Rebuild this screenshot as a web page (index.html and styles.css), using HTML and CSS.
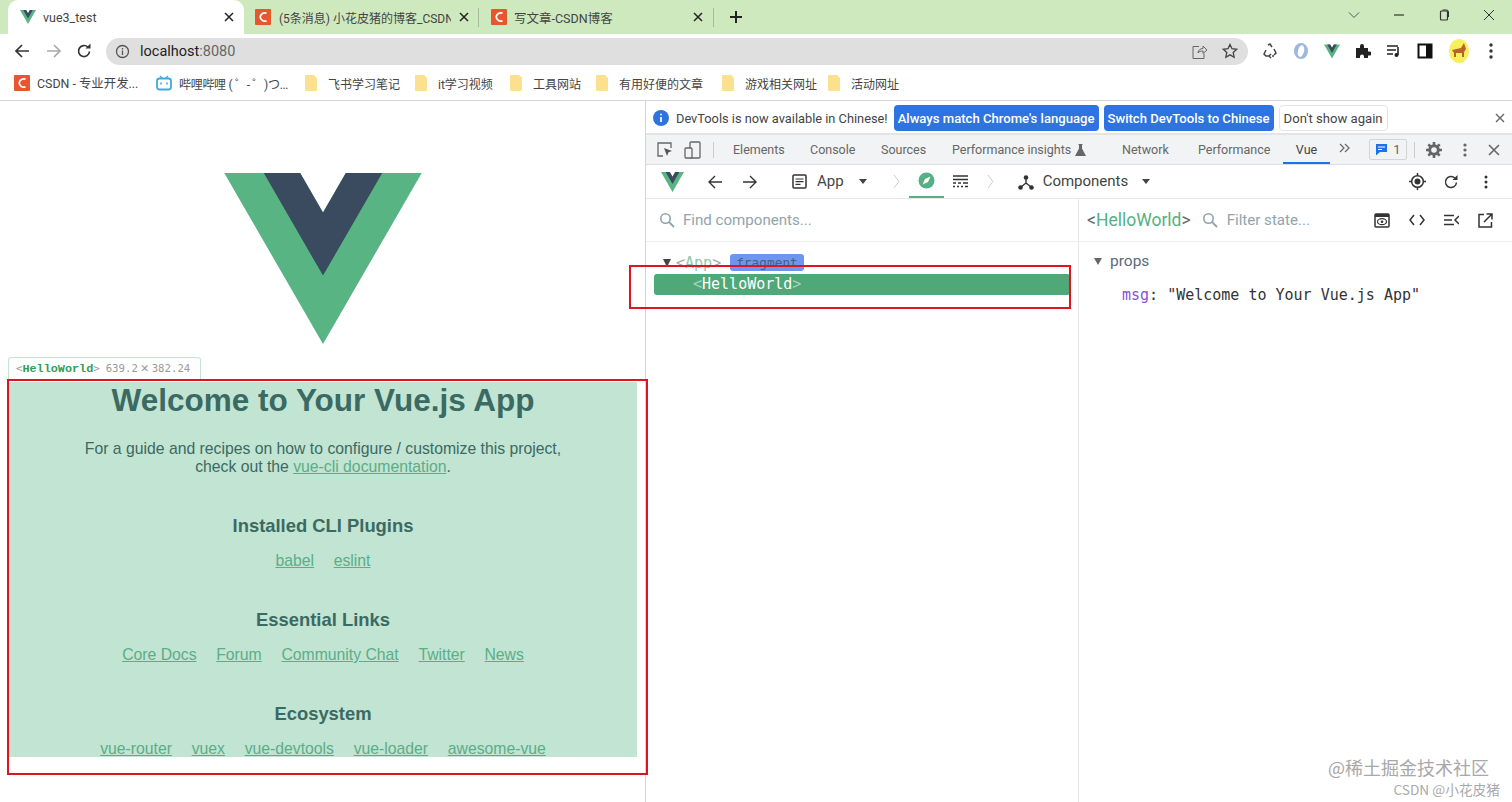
FILE: index.html
```html
<!DOCTYPE html>
<html lang="en">
<head>
  <meta charset="UTF-8" />
  <title>vue3_test</title>
  <link rel="stylesheet" href="styles.css">
</head>
<body>
  <svg class="defs" width="0" height="0">
    <symbol id="vue" viewBox="0 0 261.76 226.69">
      <path fill="#58b583" d="M161.096.001l-30.225 52.351L100.647.001H-.005l130.877 226.688L261.749.001z"/>
      <path fill="#3a4a5f" d="M161.096.001l-30.225 52.351L100.647.001H52.346l78.526 136.01L209.398.001z"/>
    </symbol>
    <symbol id="csdn" viewBox="0 0 16 16">
      <rect width="16" height="16" rx="1" fill="#e8562f"/>
      <path d="M11.5 4.2A4.6 4.6 0 0 0 5.2 8a4.6 4.6 0 0 0 6.3 3.8" fill="none" stroke="#fff" stroke-width="1.8"/>
    </symbol>
    <symbol id="folder" viewBox="0 0 13 16">
      <path d="M1 0h8l3 3v12a1 1 0 0 1-1 1H1a1 1 0 0 1-1-1V1a1 1 0 0 1 1-1z" fill="#fbe08e"/>
    </symbol>
    <symbol id="search" viewBox="0 0 16 16">
      <circle cx="6.5" cy="6.5" r="4.7" fill="none" stroke="currentColor" stroke-width="1.6"/>
      <path d="M10 10l5 5" stroke="currentColor" stroke-width="1.8"/>
    </symbol>
    <symbol id="close" viewBox="0 0 10 10">
      <path d="M1 1l8 8M9 1L1 9" stroke="#222" stroke-width="1.5"/>
    </symbol>
  </svg>

  <div class="tabstrip">
    <div class="tab active">
      <svg class="fav" width="16" height="14"><use href="#vue"/></svg>
      <span class="tab-title">vue3_test</span>
      <svg class="tab-x" width="10" height="10"><use href="#close"/></svg>
    </div>
    <div class="tab second-tab">
      <svg class="fav" width="16" height="20"><use href="#csdn"/></svg>
      <span class="tab-title">(5条消息) 小花皮猪的博客_CSDN</span>
      <svg class="tab-x" width="10" height="10"><use href="#close"/></svg>
    </div>
    <div class="tab third-tab">
      <svg class="fav" width="16" height="20"><use href="#csdn"/></svg>
      <span class="tab-title">写文章-CSDN博客</span>
      <svg class="tab-x" width="10" height="10"><use href="#close"/></svg>
    </div>
    <svg class="plus" width="14" height="14" viewBox="0 0 14 14"><path d="M7 1v12M1 7h12" stroke="#222" stroke-width="2"/></svg>
    <div class="win-controls">
      <svg width="12" height="12" viewBox="0 0 12 12"><path d="M1 3.5l5 5 5-5" fill="none" stroke="#555"/></svg>
      <svg width="12" height="12" viewBox="0 0 12 12"><path d="M1 6h10" stroke="#333" stroke-width="1.2"/></svg>
      <svg width="12" height="12" viewBox="0 0 12 12"><rect x="2.5" y="2" width="7" height="9" rx="1" fill="none" stroke="#333" stroke-width="1.2"/><path d="M4.5 1h4a2 2 0 0 1 2 2v5" fill="none" stroke="#333"/></svg>
      <svg width="12" height="12" viewBox="0 0 12 12"><path d="M1 1l10 10M11 1L1 11" stroke="#333"/></svg>
    </div>
  </div>

  <div class="toolbar">
    <svg width="16" height="16" viewBox="0 0 16 16"><path d="M15 8H2M8 2L2 8l6 6" fill="none" stroke="#333" stroke-width="1.7"/></svg>
    <svg width="16" height="16" viewBox="0 0 16 16"><path d="M1 8h13M8 2l6 6-6 6" fill="none" stroke="#aaa" stroke-width="1.7"/></svg>
    <svg width="16" height="16" viewBox="0 0 16 16"><path d="M13.5 8.5A5.5 5.5 0 1 1 11.8 4" fill="none" stroke="#333" stroke-width="1.7"/><path d="M9.5 5.6h5v-5z" fill="#333"/></svg>
    <div class="omnibox">
      <svg width="15" height="15" viewBox="0 0 15 15"><circle cx="7.5" cy="7.5" r="6" fill="none" stroke="#555" stroke-width="1.3"/><path d="M7.5 6.5v4.5M7.5 4v1.4" stroke="#555" stroke-width="1.3"/></svg>
      <span class="url">localhost<span class="port">:8080</span></span>
      <span class="spring"></span>
      <svg width="17" height="17" viewBox="0 0 17 17"><path d="M8 3.5H2v12h11v-5" fill="none" stroke="#666"/><path d="M7 10c0-3 2.500-4.500 5-4.500V3l4 4-4 3.500V8c-2 0-4 .5-5 2z" fill="none" stroke="#666"/></svg>
      <svg width="16" height="16" viewBox="0 0 17 17"><path d="M8.500 1.500l2.100 4.600 5 .6-3.700 3.400 1 5-4.400-2.500-4.400 2.500 1-5L1.400 6.700l5-.6z" fill="none" stroke="#444" stroke-width="1.400"/></svg>
    </div>
    <div class="ext">
      <svg width="16" height="16" viewBox="0 0 16 16"><path d="M6 2l2-1 2 3M12 6l2 4-2 2M4 7l-2 4 2 2h3M10 13h2M9 15l-2-2 2-2" fill="none" stroke="#444" stroke-width="1.500"/></svg>
      <svg width="16" height="18" viewBox="0 0 16 18"><ellipse cx="8" cy="9" rx="7" ry="8" fill="#9db8dc"/><ellipse cx="8" cy="9" rx="3" ry="6" fill="#fff" transform="rotate(14 8 9)"/></svg>
      <svg width="16" height="15"><use href="#vue"/></svg>
      <svg width="16" height="16" viewBox="0 0 16 16"><path d="M1 5h4V3a2 2 0 0 1 4 0v2h4v3.500h1.500a2 2 0 0 1 0 4H13V15H9v-1.500a2 2 0 0 0-4 0V15H1z" fill="#222"/></svg>
      <svg width="16" height="16" viewBox="0 0 16 16"><path d="M1 3h11M1 7h9M1 11h6" stroke="#222" stroke-width="1.600"/><path d="M12 4v8" stroke="#222" stroke-width="1.600"/><circle cx="10.500" cy="12" r="2" fill="#222"/></svg>
      <svg width="16" height="16" viewBox="0 0 16 16"><rect x="1.500" y="1.500" width="13" height="13" fill="none" stroke="#111" stroke-width="2"/><rect x="9" y="2" width="5" height="12" fill="#111"/></svg>
      <svg width="22" height="24" viewBox="0 0 22 24"><ellipse cx="11" cy="12" rx="10" ry="12" fill="#f8ef5c"/><path d="M4 11l9-2 3-5 2 6-2 3v5h-2v-4H8v4H6v-4z" fill="#b9622c"/></svg>
      <svg class="dots" width="4" height="16" viewBox="0 0 4 16"><circle cx="2" cy="2" r="1.700"/><circle cx="2" cy="8" r="1.700"/><circle cx="2" cy="14" r="1.700"/></svg>
    </div>
  </div>

  <div class="bookmarks">
    <div class="bm first"><svg width="16" height="16"><use href="#csdn"/></svg>CSDN - 专业开发...</div>
    <div class="bm second">
      <svg width="16" height="16" viewBox="0 0 16 16"><rect x="1" y="3.500" width="14" height="11" rx="2.500" fill="none" stroke="#3fa9e0" stroke-width="1.800"/><path d="M4 1l2.500 2.500M12 1L9.500 3.500" stroke="#3fa9e0" stroke-width="1.400"/><path d="M5 7.500v2M11 7.500v2" stroke="#3fa9e0" stroke-width="1.600"/></svg>
      <span class="bili">哔哩哔哩 ( ゜- ゜)つ...</span>
    </div>
    <div class="bm folder a"><svg width="13" height="16"><use href="#folder"/></svg>飞书学习笔记</div>
    <div class="bm folder b"><svg width="13" height="16"><use href="#folder"/></svg>it学习视频</div>
    <div class="bm folder c"><svg width="13" height="16"><use href="#folder"/></svg>工具网站</div>
    <div class="bm folder d"><svg width="13" height="16"><use href="#folder"/></svg>有用好便的文章</div>
    <div class="bm folder e"><svg width="13" height="16"><use href="#folder"/></svg>游戏相关网址</div>
    <div class="bm folder f"><svg width="13" height="16"><use href="#folder"/></svg>活动网址</div>
  </div>

  <main class="viewport">
    <section class="page">
      <svg class="logo" width="198" height="171"><use href="#vue"/></svg>
      <div class="hello">
        <h1>Welcome to Your Vue.js App</h1>
        <p>For a guide and recipes on how to configure / customize this project,<br>check out the <a>vue-cli documentation</a>.</p>
        <h3>Installed CLI Plugins</h3>
        <ul><li><a>babel</a></li><li><a>eslint</a></li></ul>
        <h3>Essential Links</h3>
        <ul><li><a>Core Docs</a></li><li><a>Forum</a></li><li><a>Community Chat</a></li><li><a>Twitter</a></li><li><a>News</a></li></ul>
        <h3>Ecosystem</h3>
        <ul><li><a>vue-router</a></li><li><a>vuex</a></li><li><a>vue-devtools</a></li><li><a>vue-loader</a></li><li><a>awesome-vue</a></li></ul>
      </div>
      <div class="inspect-tip"><span class="ang">&lt;</span><b>HelloWorld</b><span class="ang">&gt;</span><span class="dim size">639.2<span class="times">✕</span>382.24</span></div>
    </section>

    <section class="devtools">
      <div class="infobar">
        <svg width="16" height="16" viewBox="0 0 16 16"><circle cx="8" cy="8" r="8" fill="#2f73e0"/><path d="M8 7v5M8 3.700v1.600" stroke="#fff" stroke-width="1.700"/></svg>
        <span class="info-text">DevTools is now available in Chinese!</span>
        <button class="primary">Always match Chrome's language</button>
        <button class="primary">Switch DevTools to Chinese</button>
        <button class="plain">Don't show again</button>
        <span class="spring"></span>
        <svg width="10" height="10" viewBox="0 0 10 10"><path d="M1 1l8 8M9 1L1 9" stroke="#666" stroke-width="1.400"/></svg>
      </div>

      <div class="dt-tabs">
        <svg width="17" height="17" viewBox="0 0 17 17"><path d="M7 15H2V2h13v5" fill="none" stroke="#666" stroke-width="1.300"/><path d="M8 7l8 3-3.500 1.300L11 15z" fill="#555"/></svg>
        <svg class="device" width="17" height="18" viewBox="0 0 17 18"><rect x="6" y="1" width="10" height="16" rx="1" fill="none" stroke="#666" stroke-width="1.300"/><rect x="1" y="7" width="7" height="10" rx="1" fill="#f1f3f4" stroke="#666" stroke-width="1.300"/></svg>
        <span class="sep"></span>
        <span class="dt-tab t1">Elements</span>
        <span class="dt-tab t2">Console</span>
        <span class="dt-tab t3">Sources</span>
        <span class="dt-tab t4">Performance insights
          <svg width="11" height="12" viewBox="0 0 11 12"><path d="M3.500 0h4v1H7v3.500l4 7.500H0l4-7.500V1h-.5z" fill="#666"/></svg>
        </span>
        <span class="dt-tab t5">Network</span>
        <span class="dt-tab t6">Performance</span>
        <span class="dt-tab current">Vue</span>
        <svg class="more" width="11" height="10" viewBox="0 0 11 10"><path d="M1 1l4 4-4 4M6 1l4 4-4 4" fill="none" stroke="#666" stroke-width="1.200"/></svg>
        <span class="issues">
          <svg width="13" height="13" viewBox="0 0 13 13"><path d="M1 1h11v8H5l-4 3.500z" fill="#1a73e8"/><path d="M3 4h7M3 6.500h4" stroke="#fff"/></svg>
          1
        </span>
        <span class="sep two"></span>
        <svg width="16" height="16" viewBox="0 0 16 16"><circle cx="8" cy="8" r="4.300" fill="none" stroke="#666" stroke-width="3"/><path d="M8 0v3M8 13v3M0 8h3M13 8h3M2.300 2.300l2.200 2.200M11.500 11.500l2.200 2.200M2.300 13.700l2.200-2.200M11.500 4.500l2.200-2.200" stroke="#666" stroke-width="2.600"/></svg>
        <svg class="gap-dots" width="4" height="14" viewBox="0 0 4 14" fill="#666"><circle cx="2" cy="2" r="1.600"/><circle cx="2" cy="7" r="1.600"/><circle cx="2" cy="12" r="1.600"/></svg>
        <svg class="gap-x" width="12" height="12" viewBox="0 0 12 12"><path d="M1 1l10 10M11 1L1 11" stroke="#666" stroke-width="1.600"/></svg>
      </div>

      <div class="vue-bar">
        <svg class="vb-logo" width="23" height="20"><use href="#vue"/></svg>
        <svg class="vb-back" width="14" height="14" viewBox="0 0 14 14"><path d="M14 7H1.500M7 1L1 7l6 6" fill="none" stroke="#333" stroke-width="1.400"/></svg>
        <svg class="vb-fwd" width="14" height="14" viewBox="0 0 14 14"><path d="M0 7h12.500M7 1l6 6-6 6" fill="none" stroke="#333" stroke-width="1.400"/></svg>
        <svg class="vb-app" width="15" height="15" viewBox="0 0 15 15"><rect x="1" y="1" width="13" height="13" rx="1" fill="none" stroke="#333" stroke-width="1.500"/><path d="M3.500 5h8M3.500 7.700h8M3.500 10.400h5" stroke="#333" stroke-width="1.200"/></svg>
        <span class="vb-label app">App</span>
        <span class="caret c1"></span>
        <svg class="chev c2" width="7" height="15" viewBox="0 0 7 15"><path d="M1 1l5 6.500L1 14" fill="none" stroke="#ccc"/></svg>
        <span class="compass">
          <svg width="17" height="17" viewBox="0 0 17 17"><circle cx="8.500" cy="8.500" r="8" fill="#55b083"/><path d="M12.500 4.500L10 10l-5.500 2.500L7 7z" fill="#fff"/></svg>
        </span>
        <svg class="vb-table" width="15" height="13" viewBox="0 0 15 13"><path d="M0 1h15M0 4.500h15M0 8h3M5 8h3M10 8h5M0 11.500h2M4 11.500h2M8 11.500h2M12 11.500h3" stroke="#333" stroke-width="1.400"/></svg>
        <svg class="chev c3" width="7" height="15" viewBox="0 0 7 15"><path d="M1 1l5 6.500L1 14" fill="none" stroke="#ccc"/></svg>
        <svg class="vb-tree" width="16" height="16" viewBox="0 0 16 16"><circle cx="8" cy="3.500" r="2.300" fill="#333"/><circle cx="2.500" cy="13.500" r="2.300" fill="#333"/><circle cx="13.500" cy="13.500" r="2.300" fill="#333"/><path d="M8 4v5M8 9l-5 4M8 9l5 4" stroke="#333" stroke-width="1.400"/></svg>
        <span class="vb-label comp">Components</span>
        <span class="caret c4"></span>
        <span class="spring"></span>
        <svg width="17" height="17" viewBox="0 0 16 16"><circle cx="8" cy="8" r="5.500" fill="none" stroke="#333" stroke-width="1.400"/><circle cx="8" cy="8" r="2.800" fill="#333"/><path d="M8 0v2.500M8 13.500V16M0 8h2.500M13.500 8H16" stroke="#333" stroke-width="1.400"/></svg>
        <svg class="vb-reload" width="14" height="14" viewBox="0 0 14 14"><path d="M12.500 7.500A5.500 5.500 0 1 1 10.800 3" fill="none" stroke="#333" stroke-width="1.500"/><path d="M8.500 5h5V0z" fill="#333"/></svg>
        <svg class="vb-dots" width="4" height="14" viewBox="0 0 4 14" fill="#333"><circle cx="2" cy="2" r="1.500"/><circle cx="2" cy="7" r="1.500"/><circle cx="2" cy="12" r="1.500"/></svg>
      </div>

      <div class="split">
        <div class="tree-pane">
          <div class="search-row">
            <svg class="s-icon" width="16" height="16"><use href="#search"/></svg>
            <span class="ph">Find components...</span>
          </div>
          <div class="tree">
            <div class="node root"><span class="tri"></span><span class="ang-g"><i>&lt;</i>App<i>&gt;</i></span><span class="badge">fragment</span></div>
            <div class="node selected"><span class="ang-w">&lt;</span>HelloWorld<span class="ang-w">&gt;</span></div>
          </div>
        </div>
        <div class="state-pane">
          <div class="search-row state-head">
            <span class="comp-name"><i>&lt;</i>HelloWorld<i>&gt;</i></span>
            <svg class="s-icon" width="16" height="16"><use href="#search"/></svg>
            <span class="ph">Filter state...</span>
            <span class="spring"></span>
            <span class="state-icons">
              <svg width="16" height="15" viewBox="0 0 16 15"><rect x="1" y="1" width="14" height="13" rx="1" fill="none" stroke="#333" stroke-width="1.500"/><rect x="1" y="1" width="14" height="3" fill="#333"/><ellipse cx="8" cy="8.700" rx="4.500" ry="3" fill="none" stroke="#333" stroke-width="1.200"/><circle cx="8" cy="8.700" r="1.300" fill="#333"/></svg>
              <svg width="16" height="12" viewBox="0 0 16 12"><path d="M5 1L1 6l4 5M11 1l4 5-4 5" fill="none" stroke="#333" stroke-width="1.500"/></svg>
              <svg width="15" height="12" viewBox="0 0 15 12"><path d="M0 1.500h10M0 6h8M0 10.500h10M15 2l-4 4 4 4" fill="none" stroke="#333" stroke-width="1.500"/></svg>
              <svg width="15" height="15" viewBox="0 0 15 15"><path d="M6 1.500H1v12.500h12.500V9M8.500 1h5.500v5.500M14 1L6 9" fill="none" stroke="#333" stroke-width="1.500"/></svg>
            </span>
          </div>
          <div class="props-title"><span class="tri small"></span>props</div>
          <div class="prop"><span class="key">msg</span>: "Welcome to Your Vue.js App"</div>
        </div>
      </div>
    </section>

    <div class="mark mark-page"></div>
    <div class="mark mark-node"></div>
    <div class="watermark">
      <div class="wm1">@稀土掘金技术社区</div>
      <div class="wm2">CSDN @小花皮猪</div>
    </div>
  </main>
</body>
</html>
```

FILE: styles.css
```css
* {
  box-sizing: border-box;
}
html, body {
  margin: 0;
  height: 802px;
  overflow: hidden;
}
body {
  font-family: Roboto, "Noto Sans CJK SC", sans-serif;
  background-color: #fff;
  color: #333;
  display: flex;
  flex-direction: column;
}
.defs {
  position: absolute;
}
.spring {
  flex: 1;
}

/* browser chrome */
.tabstrip {
  height: 34px;
  background-color: #cfe9bf;
  display: flex;
  align-items: flex-end;
  padding-left: 8px;
  flex-shrink: 0;
}
.tab {
  width: 236px;
  height: 34px;
  padding: 0 10px 0 12px;
  display: flex;
  align-items: center;
  gap: 7px;
  font-size: 12.500px;
  color: #444;
  position: relative;
  flex-shrink: 0;
}
.tab.active {
  background-color: #fff;
  border-radius: 10px 10px 0 0;
}
.tab:not(.active)::after {
  content: "";
  position: absolute;
  right: 0;
  top: 8px;
  height: 19px;
  width: 1px;
  background-color: #a9bb9d;
}
.second-tab {
  width: 235px;
  padding: 0 10px 0 11px;
  gap: 8px;
  font-size: 12px;
}
.third-tab {
  width: 235px;
  padding-right: 11px;
}
.fav {
  flex-shrink: 0;
}
.tab-title {
  flex: 1;
  min-width: 0;
  white-space: nowrap;
  overflow: hidden;
}
.tab-x {
  flex-shrink: 0;
  margin-left: 6px;
}
.second-tab .tab-x {
  margin-left: 0;
}
.plus {
  margin: 0 0 10px 15px;
  flex-shrink: 0;
}
.win-controls {
  margin-left: auto;
  display: flex;
  gap: 33px;
  align-self: center;
  padding-right: 17px;
  margin-top: -4px;
}
.win-controls svg {
  display: block;
}
.toolbar {
  height: 34px;
  display: flex;
  align-items: center;
  padding-left: 14px;
  gap: 14px;
  flex-shrink: 0;
}
.toolbar > svg:nth-child(2) {
  margin-left: 2px;
}
.omnibox {
  width: 1142px;
  height: 27px;
  background-color: #dfdfdf;
  border-radius: 14px;
  display: flex;
  align-items: center;
  gap: 10px;
  padding: 0 10px 0 9px;
  font-size: 14.500px;
}
.omnibox svg:nth-of-type(3) {
  margin-left: 4px;
}
.url {
  color: #222;
}
.port {
  color: #666;
}
.ext {
  display: flex;
  align-items: center;
  gap: 15px;
}
.ext svg {
  display: block;
}
.ext .dots {
  fill: #333;
  margin-left: 4px;
}
.bookmarks {
  height: 33px;
  display: flex;
  align-items: center;
  font-size: 12px;
  color: #444;
  border-bottom: 1px solid #d5d5d5;
  padding: 0 0 2px 14px;
  flex-shrink: 0;
}
.bm {
  display: flex;
  align-items: center;
  gap: 7px;
  white-space: nowrap;
}
.first {
  width: 142px;
  font-size: 12.400px;
}
.second { width: 149px; }
.bili {
  letter-spacing: -0.300px;
}
.folder { gap: 10px; }
.a { width: 110px; }
.b { width: 95px; }
.c { width: 86px; }
.d { width: 126px; }
.e { width: 106px; }

/* page under test */
.viewport {
  flex: 1;
  display: flex;
  position: relative;
  min-height: 0;
}
.page {
  width: 645px;
  flex-shrink: 0;
  position: relative;
  font-family: "Liberation Sans", Arial, sans-serif;
  color: #2c3e50;
  text-align: center;
}
.logo {
  display: block;
  margin: 72px auto 0;
}
.hello {
  width: 628px;
  height: 375px;
  margin: 38px 0 0 9px;
  background-color: #c2e4d2;
  color: #3a6a63;
  overflow: hidden;
}
h1 {
  font-size: 31.500px;
  line-height: 37px;
  margin: 0;
}
.hello p {
  font-size: 15.750px;
  line-height: 18px;
  margin: 21px 0 0;
}
h3 {
  font-size: 18.400px;
  line-height: 22px;
  margin: 38.500px 0 0;
}
.hello ul {
  list-style: none;
  margin: 15.500px 0 0;
  padding: 0;
  display: flex;
  justify-content: center;
  gap: 19.700px;
  font-size: 15.750px;
  line-height: 18px;
}
.hello a {
  color: #5aae88;
  text-decoration: underline;
}
.inspect-tip {
  position: absolute;
  left: 8px;
  top: 256px;
  width: 193px;
  height: 23px;
  border: 1px solid #c5e3d3;
  border-bottom: none;
  border-radius: 3px 3px 0 0;
  background-color: #fff;
  padding-left: 7px;
  font-family: "DejaVu Sans Mono", monospace;
  font-size: 10.700px;
  line-height: 20px;
  text-align: left;
  white-space: nowrap;
}
.inspect-tip b {
  color: #2f9e58;
  font-family: "Liberation Mono", monospace;
  font-size: 11.800px;
}
.ang, .dim {
  color: #999;
}
.size {
  margin-left: 6px;
}
.times {
  font-size: 13px;
  margin: 0 3px;
}

/* devtools */
.devtools {
  flex: 1;
  border-left: 1px solid #d5d5d5;
  display: flex;
  flex-direction: column;
  font-size: 13px;
  min-width: 0;
}
.infobar {
  height: 34px;
  border-bottom: 2px solid #e4e4e4;
  display: flex;
  align-items: center;
  padding: 2px 7px 0 7px;
  flex-shrink: 0;
}
.info-text {
  margin: 0 6px 0 7px;
  font-size: 12.800px;
  color: #444;
  white-space: nowrap;
}
.infobar button {
  height: 26px;
  border-radius: 4px;
  font-family: Roboto, sans-serif;
  font-size: 13.100px;
  padding: 0 4px;
  margin-right: 5px;
  white-space: nowrap;
}
.primary {
  background-color: #2f73e0;
  color: #fff;
  border: none;
  font-weight: 500;
}
.plain {
  background-color: #fff;
  color: #444;
  border: 1px solid #e4e4e4;
}
.dt-tabs {
  height: 30px;
  background-color: #f1f3f4;
  border-bottom: 1px solid #ddd;
  display: flex;
  align-items: center;
  padding-left: 10px;
  font-size: 12.500px;
  color: #666;
  flex-shrink: 0;
  white-space: nowrap;
}
.device {
  margin-left: 11px;
}
.sep {
  width: 1px;
  height: 16px;
  background-color: #ccc;
  margin: 0 19px 0 12px;
}
.sep.two {
  margin: 0 11px 0 7px;
}
.dt-tab {
  display: flex;
  align-items: center;
  height: 100%;
  gap: 4px;
}
.t1 { width: 77px; }
.t2 { width: 71px; }
.t3 { width: 71px; }
.t4 { width: 170px; }
.t5 { width: 76px; }
.t6 { width: 85px; }
.dt-tab.current {
  width: 47px;
  justify-content: center;
  color: #444;
  border-bottom: 2px solid #1a73e8;
  padding-top: 2px;
}
.more {
  margin: -3px 0 0 9px;
}
.issues {
  margin-left: 19px;
  width: 38px;
  height: 21px;
  border: 1px solid #d5d5d5;
  border-radius: 2px;
  display: flex;
  align-items: center;
  justify-content: center;
  gap: 5px;
  font-size: 13px;
}
.gap-dots {
  margin-left: 21px;
}
.gap-x {
  margin-left: 21px;
}
.vue-bar {
  height: 34px;
  border-bottom: 1px solid #e8e8e8;
  display: flex;
  align-items: center;
  padding: 0 24px 0 15px;
  font-size: 15px;
  color: #444;
  flex-shrink: 0;
}
.vb-label {
  margin-bottom: 2px;
}
.vb-back { margin-left: 24px; }
.vb-fwd { margin-left: 21px; }
.vb-app { margin-left: 35px; }
.vb-label.app { margin-left: 10px; }
.caret {
  width: 0;
  height: 0;
  border-left: 4.500px solid transparent;
  border-right: 4.500px solid transparent;
  border-top: 5px solid #444;
}
.c1 { margin-left: 15px; }
.c2 { margin-left: 26px; }
.compass {
  width: 35px;
  height: 33px;
  margin-left: 9px;
  border-bottom: 2px solid #55b083;
  display: flex;
  align-items: center;
  justify-content: center;
}
.vb-table { margin-left: 9px; }
.c3 { margin-left: 19px; }
.vb-tree { margin-left: 24px; }
.vb-label.comp { margin-left: 9px; }
.c4 { margin-left: 14px; }
.vb-reload { margin-left: 18px; }
.vb-dots { margin-left: 26px; }
.split {
  flex: 1;
  display: flex;
  min-height: 0;
}
.tree-pane {
  width: 433px;
  border-right: 1px solid #e8e8e8;
  flex-shrink: 0;
}
.state-pane {
  flex: 1;
  min-width: 0;
}
.search-row {
  height: 43px;
  border-bottom: 1px solid #eee;
  display: flex;
  align-items: center;
  padding-left: 13px;
  font-size: 15.100px;
  color: #90a4ae;
}
.ph {
  margin-left: 9px;
  color: #90a4ae;
}
.tree-pane .ph {
  margin-left: 8px;
}
.s-icon {
  color: #90a4ae;
}
.tree {
  padding: 12px 9px 0 8px;
  font-family: "DejaVu Sans Mono", monospace;
  font-size: 15px;
}
.node {
  height: 21px;
  line-height: 21px;
  display: flex;
  align-items: center;
  white-space: nowrap;
}
.root {
  padding-left: 9px;
  height: 18px;
}
.tri {
  width: 0;
  height: 0;
  border-left: 4.500px solid transparent;
  border-right: 4.500px solid transparent;
  border-top: 8px solid #444;
  margin-right: 4px;
}
.ang-g {
  color: #8fc9a8;
  margin-left: 1px;
}
.ang-g i {
  color: #aaa;
  font-style: normal;
}
.badge {
  background-color: #6e96f0;
  color: #4b5f7c;
  font-size: 12.800px;
  line-height: 17px;
  height: 17px;
  padding: 0 6px;
  border-radius: 3px;
  margin: -2px 0 0 9px;
}
.selected {
  background-color: #4fa877;
  color: #fff;
  border-radius: 3px;
  padding-left: 39px;
  margin-top: 2px;
  margin-right: -1px;
}
.ang-w {
  color: #a5d3ba;
}
.state-head {
  padding-left: 8px;
  padding-right: 19px;
}
.comp-name {
  color: #55b083;
  font-size: 17.500px;
  margin-right: 11px;
}
.comp-name i {
  color: #666;
  font-style: normal;
}
.state-icons {
  display: flex;
  align-items: center;
  gap: 19px;
}
.props-title {
  display: flex;
  align-items: center;
  padding: 10px 0 0 15px;
  font-size: 15.500px;
  color: #5a6b7b;
}
.tri.small {
  border-left-width: 4px;
  border-right-width: 4px;
  border-top-width: 7px;
  border-top-color: #666;
  margin-right: 8px;
}
.prop {
  margin: 16px 0 0 43px;
  font-family: "DejaVu Sans Mono", monospace;
  font-size: 15px;
  color: #333;
  white-space: pre;
}
.key {
  color: #8b4fd8;
}

/* red marks laid over the screenshot, and its watermark */
.mark {
  position: absolute;
  border: 2px solid #e0141e;
  pointer-events: none;
}
.mark-page {
  left: 7px;
  top: 278px;
  width: 641px;
  height: 396px;
}
.mark-node {
  left: 629px;
  top: 164px;
  width: 442px;
  height: 44px;
}
.watermark {
  position: absolute;
  right: 12px;
  top: 654px;
  text-align: right;
  font-family: "Noto Sans CJK SC", sans-serif;
  color: #a8a8a8;
}
.wm1 {
  font-size: 18px;
  line-height: 25px;
  margin-right: 11px;
}
.wm2 {
  font-size: 13.700px;
  line-height: 18px;
  color: #aaa;
}
```
